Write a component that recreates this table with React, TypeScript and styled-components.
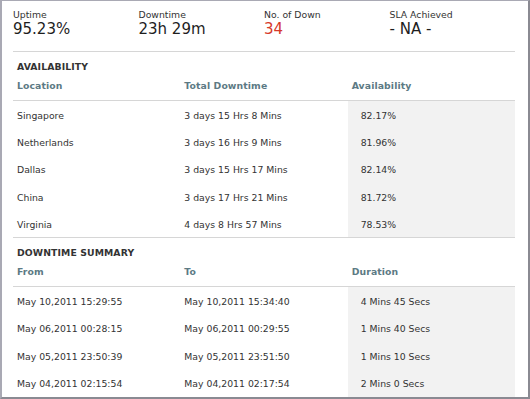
import React from 'react';
import styled, { createGlobalStyle } from 'styled-components';

const GlobalStyle = createGlobalStyle`
  html, body {
    margin: 0;
    padding: 0;
    background: #ffffff;
  }
  body {
    font-family: "DejaVu Sans", Verdana, sans-serif;
  }
`;

const Frame = styled.div`
  box-sizing: border-box;
  width: 530px;
  height: 399px;
  overflow: hidden;
  background: #ffffff;
  border-style: solid;
  border-width: 1px 2px 2px 2px;
  border-color: #a9a9b4 #8a8a92 #8a8a92 #a9a9b4;
  padding: 0 13px 0 11px;
`;

const Stats = styled.div`
  display: grid;
  grid-template-columns: repeat(4, 1fr);
  height: 51px;
  padding-top: 8px;
  box-sizing: border-box;
  border-bottom: 1px solid #d6d6d6;
`;

const Stat = styled.div`
  display: flex;
  flex-direction: column;
`;

const StatLabel = styled.span`
  font-size: 9.3px;
  line-height: 12px;
  color: #333333;
`;

const StatValue = styled.span<{ $alert?: boolean }>`
  font-size: 15px;
  line-height: 16px;
  margin-top: 0;
  color: ${(p) => (p.$alert ? '#d6392b' : '#1e1e1e')};
`;

const SectionTitle = styled.div`
  padding: 8px 0 0 4px;
  font-size: 9.3px;
  line-height: 13px;
  font-weight: bold;
  letter-spacing: 0.1px;
  color: #333333;
`;

const Grid = styled.div`
  display: grid;
  grid-template-columns: repeat(3, 1fr);
`;

const HeaderRow = styled(Grid)`
  padding: 6px 0 8px;
  border-bottom: 1px solid #d6d6d6;
`;

const HeadCell = styled.div`
  padding-left: 4px;
  font-size: 9.3px;
  line-height: 13px;
  font-weight: bold;
  letter-spacing: 0.1px;
  color: #5c7a84;
`;

const Body = styled(Grid)<{ $closed?: boolean }>`
  border-bottom: ${(p) => (p.$closed ? '1px solid #d6d6d6' : 'none')};
`;

const Cell = styled.div<{ $shade?: boolean }>`
  height: 27.3px;
  display: flex;
  align-items: center;
  padding-left: ${(p) => (p.$shade ? '13px' : '4px')};
  padding-top: 1px;
  box-sizing: border-box;
  background: ${(p) => (p.$shade ? '#f2f2f2' : 'transparent')};
  font-size: 9.3px;
  color: #333333;
  white-space: nowrap;
`;

type Row = [string, string, string];

const availability: Row[] = [
  ['Singapore', '3 days 15 Hrs 8 Mins', '82.17%'],
  ['Netherlands', '3 days 16 Hrs 9 Mins', '81.96%'],
  ['Dallas', '3 days 15 Hrs 17 Mins', '82.14%'],
  ['China', '3 days 17 Hrs 21 Mins', '81.72%'],
  ['Virginia', '4 days 8 Hrs 57 Mins', '78.53%'],
];

const downtimes: Row[] = [
  ['May 10,2011 15:29:55', 'May 10,2011 15:34:40', '4 Mins 45 Secs'],
  ['May 06,2011 00:28:15', 'May 06,2011 00:29:55', '1 Mins 40 Secs'],
  ['May 05,2011 23:50:39', 'May 05,2011 23:51:50', '1 Mins 10 Secs'],
  ['May 04,2011 02:15:54', 'May 04,2011 02:17:54', '2 Mins 0 Secs'],
];

const Section: React.FC<{ title: string; heads: Row; rows: Row[]; closed?: boolean }> = ({
  title,
  heads,
  rows,
  closed,
}) => (
  <>
    <SectionTitle>{title}</SectionTitle>
    <HeaderRow>
      {heads.map((h) => (
        <HeadCell key={h}>{h}</HeadCell>
      ))}
    </HeaderRow>
    <Body $closed={closed}>
      {rows.map((r) => (
        <React.Fragment key={r[0]}>
          <Cell>{r[0]}</Cell>
          <Cell>{r[1]}</Cell>
          <Cell $shade>{r[2]}</Cell>
        </React.Fragment>
      ))}
    </Body>
  </>
);

const App: React.FC = () => (
  <>
    <GlobalStyle />
    <Frame>
      <Stats>
        <Stat>
          <StatLabel>Uptime</StatLabel>
          <StatValue>95.23%</StatValue>
        </Stat>
        <Stat>
          <StatLabel>Downtime</StatLabel>
          <StatValue>23h 29m</StatValue>
        </Stat>
        <Stat>
          <StatLabel>No. of Down</StatLabel>
          <StatValue $alert>34</StatValue>
        </Stat>
        <Stat>
          <StatLabel>SLA Achieved</StatLabel>
          <StatValue>- NA -</StatValue>
        </Stat>
      </Stats>
      <Section
        title="AVAILABILITY"
        heads={['Location', 'Total Downtime', 'Availability']}
        rows={availability}
        closed
      />
      <Section title="DOWNTIME SUMMARY" heads={['From', 'To', 'Duration']} rows={downtimes} />
    </Frame>
  </>
);

export default App;
